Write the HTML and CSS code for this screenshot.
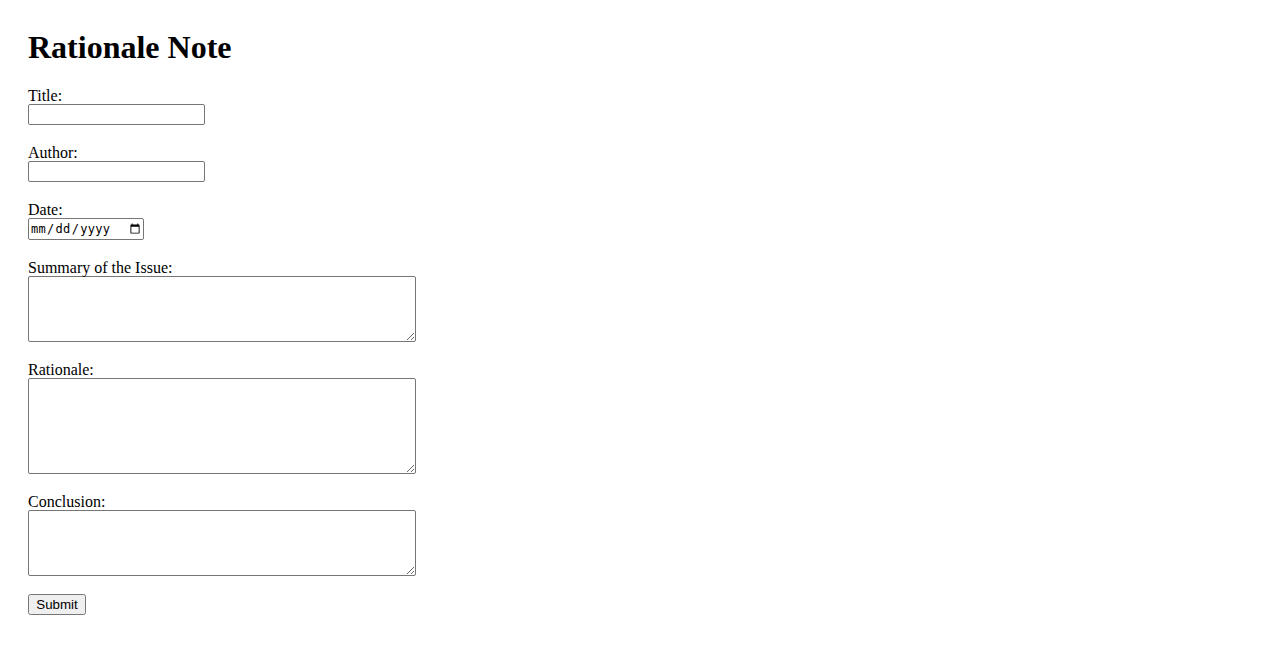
FILE: index.html
```html
<!DOCTYPE html>
<html lang="en">
<head>
    <meta charset="UTF-8">
    <title>Rationale Note</title>
    <link rel="stylesheet" href="styles.css">
</head>
<body>
    <h1>Rationale Note</h1>
    <form method="POST" action="/submit">
        <div class="field">
            <label for="title">Title:</label>
            <input type="text" id="title" name="title" class="text-input" />
        </div>

        <div class="field">
            <label for="author">Author:</label>
            <input type="text" id="author" name="author" class="text-input" />
        </div>

        <div class="field">
            <label for="date">Date:</label>
            <input type="date" id="date" name="date" class="date-input" />
        </div>

        <div class="field">
            <label for="summary">Summary of the Issue:</label>
            <textarea id="summary" name="summary" class="area area-short"></textarea>
        </div>

        <div class="field">
            <label for="rationale">Rationale:</label>
            <textarea id="rationale" name="rationale" class="area area-tall"></textarea>
        </div>

        <div class="field">
            <label for="conclusion">Conclusion:</label>
            <textarea id="conclusion" name="conclusion" class="area area-short"></textarea>
        </div>

        <button type="submit" class="submit-btn">Submit</button>
    </form>
</body>
</html>
```

FILE: styles.css
```css
body {
    font-family: "Liberation Serif", "Times New Roman", serif;
    font-size: 16px;
    margin: 0;
    padding: 29px 28px 28px;
    background: #fff;
    color: #000;
}
h1 {
    font-size: 32px;
    margin: 0 0 20px;
    line-height: 37px;
}
.field {
    margin-bottom: 18px;
}
.field label {
    display: block;
    box-sizing: border-box;
    height: 18px;
    padding-top: 1px;
    line-height: 18px;
}
.text-input,
.date-input,
.area {
    display: block;
    box-sizing: border-box;
    margin: 0;
    border: 1px solid #767676;
    border-radius: 2px;
}
.text-input {
    width: 177px;
    height: 21px;
}
.date-input {
    width: 116px;
    height: 22px;
    font-family: "DejaVu Sans Mono", monospace;
    font-size: 12px;
    letter-spacing: 0.3px;
}
.area {
    width: 388px;
}
.area-short {
    height: 66px;
}
.area-tall {
    height: 96px;
}
.submit-btn {
    font-family: "Liberation Sans", Arial, sans-serif;
    font-size: 13.33px;
    height: 21px;
    width: 58px;
    padding: 1px 6px;
}
```
